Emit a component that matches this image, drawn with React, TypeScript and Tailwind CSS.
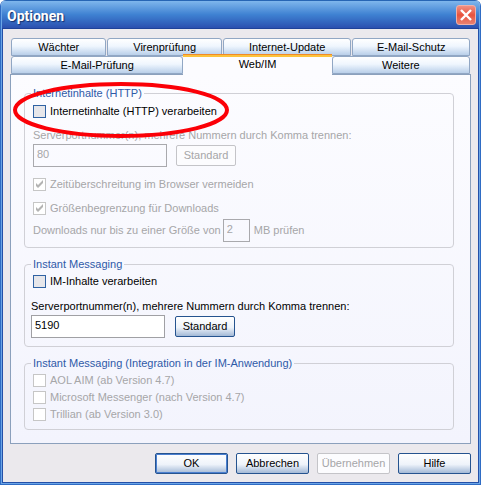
import React from 'react';
import clsx from 'clsx';

/**
 * Options dialog
 * Web/IM page with the HTTP and instant messaging settings
 */

interface CheckOption {
  id: string;
  label: string;
}

const firstRowTabs = ['Wächter', 'Virenprüfung', 'Internet-Update', 'E-Mail-Schutz'];

const messengers: CheckOption[] = [
  { id: 'aim', label: 'AOL AIM (ab Version 4.7)' },
  { id: 'msn', label: 'Microsoft Messenger (nach Version 4.7)' },
  { id: 'trillian', label: 'Trillian (ab Version 3.0)' },
];

const Tab: React.FC<{ label: string; active?: boolean }> = ({ label, active }) => (
  <button
    type="button"
    role="tab"
    aria-selected={!!active}
    className={clsx(
      'flex items-center justify-center whitespace-nowrap',
      active
        ? 'relative -mt-[2px] -mb-px h-[21px] border-t border-[#f08a28] bg-[#fcfcff] pb-px shadow-[inset_0_2px_0_#fcc33c]'
        : 'h-[18px] rounded-t-[3px] border border-[#91a7c4] bg-linear-to-b from-white via-[#eff6fe] via-45% to-[#b9cfe9]'
    )}
  >
    {label}
  </button>
);

const Group: React.FC<{ title: string; className?: string; children: React.ReactNode }> = ({
  title,
  className,
  children,
}) => (
  <fieldset className={clsx('rounded-[4px] border border-[#d0d0d6] px-[6px]', className)}>
    <legend className="px-[2px] leading-[14px] text-[#2f5aa8]">{title}</legend>
    {children}
  </fieldset>
);

const Check: React.FC<CheckOption & { checked?: boolean; disabled?: boolean }> = ({
  id,
  label,
  checked,
  disabled,
}) => (
  <div className="flex h-[15px] items-center gap-1 pl-[2px]">
    <span className="relative flex size-[13px]">
      <input
        id={id}
        type="checkbox"
        defaultChecked={checked}
        disabled={disabled}
        className={clsx(
          'size-[13px] appearance-none border',
          disabled ? 'border-[#c6c6c6] bg-white' : 'border-[#2f62a3] bg-[#e6e6ea]'
        )}
      />
      {checked && (
        <svg viewBox="0 0 13 13" className="pointer-events-none absolute inset-0 size-[13px]">
          <path d="M3 5v3l2 2 5-5V2L5 7z" fill="#b3b3b3" />
        </svg>
      )}
    </span>
    <label htmlFor={id} className={clsx('whitespace-nowrap', disabled && 'text-[#a6a6a8]')}>
      {label}
    </label>
  </div>
);

const PushButton: React.FC<{
  label: string;
  className: string;
  disabled?: boolean;
  primary?: boolean;
}> = ({ label, className, disabled, primary }) => (
  <button
    type="button"
    disabled={disabled}
    className={clsx(
      'h-[21px] rounded-[2px] border text-center',
      className,
      disabled && 'border-[#c4c4c8] bg-[#fcfcfe] text-[#a6a6a8]',
      !disabled && 'border-[#25538f] bg-linear-to-b from-white via-[#eef3fa] via-55% to-[#a3b9d6]',
      primary && 'ring-1 ring-[#4a7fd0] ring-inset'
    )}
  >
    {label}
  </button>
);

const App: React.FC = () => {
  return (
    <div className="relative w-full overflow-hidden rounded-t-[6px] border-x border-b border-[#2f6cc4] bg-[#ebe9ed] font-['Liberation_Sans',Arial,sans-serif] text-[11px] leading-[15px] text-black">
      <div className="border-x border-b border-[#6ba5e6]">
        {/* Title bar */}
        <header className="flex h-[29px] items-center justify-between border-t border-b border-t-[#2765b4] border-b-[#1f4299] bg-linear-to-b from-[#7fb6ec] via-[#3f82d2] via-50% to-[#2c50b0] pr-[3px] pl-[5px]">
          <h1 className="pt-[3px] font-[Roboto,sans-serif] text-[14px] font-bold text-white [text-shadow:1px_1px_1px_#16306e]">
            Optionen
          </h1>
          <button
            type="button"
            aria-label="Schließen"
            className="flex size-[20px] items-center justify-center rounded-[3px] border border-[#f0b0a8] bg-linear-to-b from-[#ee8f83] via-[#e8523c] to-[#e88070]"
          >
            <svg viewBox="0 0 12 12" className="size-[12px]" stroke="#fff" strokeWidth="2.4">
              <path d="M1 1l10 10M11 1L1 11" />
            </svg>
          </button>
        </header>

        <main className="border-x border-b border-[#2450a8] px-[7px] pt-[9px] pb-[8px]">
          {/* Tabs */}
          <div role="tablist" className="px-px">
            <div className="grid grid-cols-[95fr_114fr_128fr_117fr] gap-px">
              {firstRowTabs.map((tab) => (
                <Tab key={tab} label={tab} />
              ))}
            </div>
            <div className="grid grid-cols-[172fr_148fr_138fr]">
              <Tab label="E-Mail-Prüfung" />
              <Tab label="Web/IM" active />
              <Tab label="Weitere" />
            </div>
          </div>

          {/* Web/IM page */}
          <section className="border border-[#8ba0bc] bg-linear-to-b from-[#fcfcff] to-[#f3f4fd] pt-[11px] pr-4 pb-[13px] pl-[13px]">
            <Group title="Internetinhalte (HTTP)" className="pb-[5px]">
              <div className="pt-1">
                <Check id="http" label="Internetinhalte (HTTP) verarbeiten" />
              </div>
              <div className="mt-[9px] pl-[2px] text-[#a6a6a8]">
                <label htmlFor="http-port">
                  Serverportnummer(n), mehrere Nummern durch Komma trennen:
                </label>
                <div className="mt-px flex items-center gap-[9px]">
                  <input
                    id="http-port"
                    defaultValue="80"
                    disabled
                    className="h-[23px] w-[134px] border border-[#a9a9ad] px-[3px] pb-[3px]"
                  />
                  <PushButton label="Standard" className="w-[60px]" disabled />
                </div>
              </div>
              <div className="mt-[10px] flex flex-col gap-[9px]">
                <Check
                  id="timeout"
                  label="Zeitüberschreitung im Browser vermeiden"
                  checked
                  disabled
                />
                <Check id="limit" label="Größenbegrenzung für Downloads" checked disabled />
              </div>
              <div className="mt-[3px] flex items-center pl-[2px] text-[#a6a6a8]">
                <label htmlFor="size">Downloads nur bis zu einer Größe von</label>
                <input
                  id="size"
                  defaultValue="2"
                  disabled
                  className="mr-[4px] ml-[2px] h-[23px] w-[27px] border border-[#a9a9ad] px-[3px] pb-[3px]"
                />
                <span>MB prüfen</span>
              </div>
            </Group>

            <Group title="Instant Messaging" className="mt-[9px] pb-2">
              <div className="pt-[3px]">
                <Check id="im" label="IM-Inhalte verarbeiten" />
              </div>
              <div className="mt-[10px]">
                <label htmlFor="im-port">
                  Serverportnummer(n), mehrere Nummern durch Komma trennen:
                </label>
                <div className="mt-px flex items-center gap-[10px]">
                  <input
                    id="im-port"
                    defaultValue="5190"
                    className="h-[23px] w-[134px] border border-[#a0a0a4] bg-white px-[3px] pb-[3px]"
                  />
                  <PushButton label="Standard" className="w-[60px]" />
                </div>
              </div>
            </Group>

            <Group
              title="Instant Messaging (Integration in der IM-Anwendung)"
              className="mt-[9px] pb-[7px]"
            >
              <div className="flex flex-col gap-[2px] pt-[3px]">
                {messengers.map((messenger) => (
                  <Check key={messenger.id} {...messenger} disabled />
                ))}
              </div>
            </Group>
          </section>

          {/* Dialog buttons */}
          <footer className="mt-[9px] flex justify-end gap-2">
            <PushButton label="OK" className="w-[73px]" primary />
            <PushButton label="Abbrechen" className="w-[73px]" />
            <PushButton label="Übernehmen" className="w-[73px]" disabled />
            <PushButton label="Hilfe" className="w-[73px]" />
          </footer>
        </main>
      </div>

      {/* Marker round the HTTP option */}
      <svg
        viewBox="0 0 218 58"
        className="pointer-events-none absolute top-[81px] left-[11px] h-[58px] w-[218px]"
      >
        <ellipse cx="109" cy="29" rx="106" ry="26" fill="none" stroke="#fb0007" strokeWidth="4" />
      </svg>
    </div>
  );
};

export default App;
